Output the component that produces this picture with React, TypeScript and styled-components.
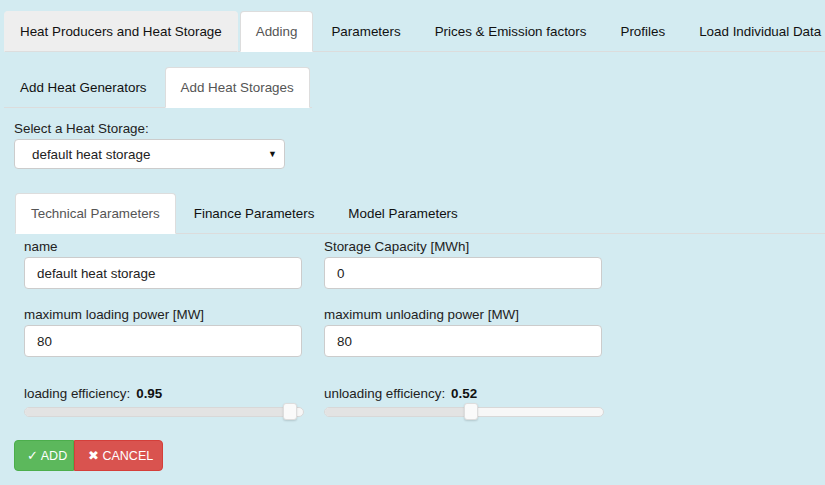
import React from "react";
import styled, { createGlobalStyle, css } from "styled-components";

const GlobalStyle = createGlobalStyle`
  html, body {
    margin: 0;
    padding: 0;
    background: #d3ebf1;
  }
  body {
    font-family: "Liberation Sans", Arial, Helvetica, sans-serif;
    font-size: 13.4px;
    color: #333;
  }
  * { box-sizing: border-box; }
`;

const Page = styled.div`
  min-height: 485px;
  padding-top: 11px;
  background: #d3ebf1;
  overflow: hidden;
`;

type TabVariant = "active" | "muted" | "plain";

const TabList = styled.div<{ $inline?: boolean; $left: number }>`
  display: ${(p) => (p.$inline ? "inline-flex" : "flex")};
  margin-left: ${(p) => p.$left}px;
  border-bottom: 1px solid #dcdcdc;
  white-space: nowrap;
`;

const Tab = styled.div<{ $variant: TabVariant }>`
  padding: 10px 15px;
  line-height: 19px;
  margin-right: 2px;
  margin-bottom: -1px;
  border: 1px solid transparent;
  border-radius: 4px 4px 0 0;
  color: #111;
  ${(p) =>
    p.$variant === "active" &&
    css`
      background: #fff;
      border-color: #ddd #ddd transparent #ddd;
      color: #555;
    `}
  ${(p) =>
    p.$variant === "muted" &&
    css`
      background: #eee;
      border-color: #eee #eee #ddd #eee;
    `}
`;

const SubNav = styled.div`
  padding-top: 15px;
`;

const SelectSection = styled.div`
  padding: 12px 0 0 14px;
`;

const FieldLabel = styled.div`
  line-height: 18px;
  margin-bottom: 1px;
  color: #222;
`;

const SelectBox = styled.div`
  width: 271px;
  height: 30px;
  background: #fff;
  border: 1px solid #ccc;
  border-radius: 4px;
  display: flex;
  align-items: center;
  justify-content: space-between;
  padding: 0 7px 0 17px;
  color: #222;
`;

const Arrow = styled.span`
  font-size: 9px;
  color: #111;
`;

const InnerNav = styled.div`
  padding-top: 24px;
`;

const FormGrid = styled.div`
  display: grid;
  grid-template-columns: 278px 278px;
  column-gap: 22px;
  row-gap: 17px;
  padding: 4px 0 0 24px;
`;

const Field = styled.div`
  display: flex;
  flex-direction: column;
`;

const TextInput = styled.div`
  height: 32px;
  background: #fff;
  border: 1px solid #ccc;
  border-radius: 4px;
  padding-left: 12px;
  display: flex;
  align-items: center;
  color: #222;
`;

const SliderGrid = styled.div`
  display: grid;
  grid-template-columns: 280px 280px;
  column-gap: 20px;
  padding: 28px 0 0 24px;
`;

const SliderLabel = styled.div`
  line-height: 18px;
  color: #222;
  display: flex;
  gap: 6px;
`;

const SliderValue = styled.b`
  color: #111;
`;

const Track = styled.div`
  position: relative;
  height: 10px;
  margin-top: 4px;
  border: 1px solid #d8d8d8;
  border-radius: 5px;
  background: #f7f7f7;
`;

const Fill = styled.div`
  height: 100%;
  background: #e3e3e3;
  border-radius: 5px 0 0 5px;
`;

const Thumb = styled.div`
  position: absolute;
  top: -5px;
  width: 14px;
  height: 17px;
  background: #fafafa;
  border: 1px solid #ddd;
  border-radius: 3px;
  box-shadow: 0 1px 2px rgba(0, 0, 0, 0.15);
`;

const ButtonRow = styled.div`
  display: flex;
  padding: 23px 0 0 14px;
`;

const Button = styled.div<{ $kind: "add" | "cancel" }>`
  height: 31px;
  display: flex;
  align-items: center;
  font-size: 12.5px;
  color: #fff;
  ${(p) =>
    p.$kind === "add"
      ? css`
          width: 60px;
          padding-left: 12px;
          background: #5cb85c;
          border: 1px solid #4cae4c;
          border-radius: 4px 0 0 4px;
        `
      : css`
          width: 89px;
          padding-left: 13px;
          background: #d9534f;
          border: 1px solid #d43f3a;
          border-radius: 0 4px 4px 0;
        `}
`;

function Slider({ label, value, pos }: { label: string; value: string; pos: number }) {
  return (
    <div>
      <SliderLabel>
        <span>{label}</span>
        <SliderValue>{value}</SliderValue>
      </SliderLabel>
      <Track>
        <Fill style={{ width: `${pos}px` }} />
        <Thumb style={{ left: `${pos - 2}px` }} />
      </Track>
    </div>
  );
}

export default function App() {
  return (
    <>
      <GlobalStyle />
      <Page>
        <TabList $left={4}>
          <Tab $variant="muted">Heat Producers and Heat Storage</Tab>
          <Tab $variant="active">Adding</Tab>
          <Tab $variant="plain">Parameters</Tab>
          <Tab $variant="plain">Prices &amp; Emission factors</Tab>
          <Tab $variant="plain">Profiles</Tab>
          <Tab $variant="plain">Load Individual Data</Tab>
        </TabList>
        <SubNav>
          <TabList $inline $left={4}>
            <Tab $variant="plain">Add Heat Generators</Tab>
            <Tab $variant="active">Add Heat Storages</Tab>
          </TabList>
        </SubNav>
        <SelectSection>
          <FieldLabel>Select a Heat Storage:</FieldLabel>
          <SelectBox>
            <span>default heat storage</span>
            <Arrow>▼</Arrow>
          </SelectBox>
        </SelectSection>
        <InnerNav>
          <TabList $left={15}>
            <Tab $variant="active">Technical Parameters</Tab>
            <Tab $variant="plain">Finance Parameters</Tab>
            <Tab $variant="plain">Model Parameters</Tab>
          </TabList>
        </InnerNav>
        <FormGrid>
          <Field>
            <FieldLabel>name</FieldLabel>
            <TextInput>default heat storage</TextInput>
          </Field>
          <Field>
            <FieldLabel>Storage Capacity [MWh]</FieldLabel>
            <TextInput>0</TextInput>
          </Field>
          <Field>
            <FieldLabel>maximum loading power [MW]</FieldLabel>
            <TextInput>80</TextInput>
          </Field>
          <Field>
            <FieldLabel>maximum unloading power [MW]</FieldLabel>
            <TextInput>80</TextInput>
          </Field>
        </FormGrid>
        <SliderGrid>
          <Slider label="loading efficiency:" value="0.95" pos={260} />
          <Slider label="unloading efficiency:" value="0.52" pos={141} />
        </SliderGrid>
        <ButtonRow>
          <Button $kind="add">✓ ADD</Button>
          <Button $kind="cancel">✖ CANCEL</Button>
        </ButtonRow>
      </Page>
    </>
  );
}
